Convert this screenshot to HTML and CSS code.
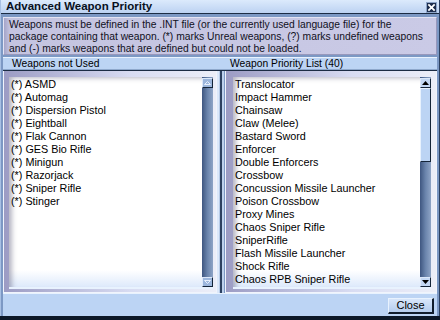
FILE: index.html
```html
<!DOCTYPE html>
<html>
<head>
<meta charset="utf-8">
<link rel="stylesheet" href="styles.css">
</head>
<body>
<div class="win">
  <div class="title">
    <span class="title-text">Advanced Weapon Priority</span>
    <span class="close-x"><svg width="10" height="9" viewBox="0 0 10 9"><path d="M1.5 1 L8.5 8 M8.5 1 L1.5 8" stroke="#fff" stroke-width="2"/></svg></span>
  </div>
  <div class="desc">Weapons must be defined in the .INT file (or the currently used language file) for the package containing that weapon. (*) marks Unreal weapons, (?) marks undefined weapons and (-) marks weapons that are defined but could not be loaded.</div>
  <div class="heads">
    <div class="head head-left">Weapons not Used</div>
    <div class="head head-right">Weapon Priority List (40)</div>
  </div>
  <div class="panels">
    <div class="panel panel-left">
      <div class="list">
        <div class="items">
          <div>(*) ASMD</div>
          <div>(*) Automag</div>
          <div>(*) Dispersion Pistol</div>
          <div>(*) Eightball</div>
          <div>(*) Flak Cannon</div>
          <div>(*) GES Bio Rifle</div>
          <div>(*) Minigun</div>
          <div>(*) Razorjack</div>
          <div>(*) Sniper Rifle</div>
          <div>(*) Stinger</div>
        </div>
        <div class="sbar">
          <div class="sbtn"><svg width="9" height="8" viewBox="0 0 9 8"><path d="M1.5 5.5 L4.5 2.5 L7.5 5.5 Z" fill="none" stroke="#e8f0fc" stroke-width="1"/></svg></div>
          <div class="strack"></div>
          <div class="sbtn"><svg width="9" height="8" viewBox="0 0 9 8"><path d="M1.5 2.5 L4.5 5.5 L7.5 2.5 Z" fill="none" stroke="#e8f0fc" stroke-width="1"/></svg></div>
        </div>
      </div>
    </div>
    <div class="divider"></div>
    <div class="panel panel-right">
      <div class="list">
        <div class="items">
          <div>Translocator</div>
          <div>Impact Hammer</div>
          <div>Chainsaw</div>
          <div>Claw (Melee)</div>
          <div>Bastard Sword</div>
          <div>Enforcer</div>
          <div>Double Enforcers</div>
          <div>Crossbow</div>
          <div>Concussion Missile Launcher</div>
          <div>Poison Crossbow</div>
          <div>Proxy Mines</div>
          <div>Chaos Sniper Rifle</div>
          <div>SniperRifle</div>
          <div>Flash Missile Launcher</div>
          <div>Shock Rifle</div>
          <div>Chaos RPB Sniper Rifle</div>
        </div>
        <div class="sbar">
          <div class="sbtn"><svg width="9" height="8" viewBox="0 0 9 8"><path d="M1 6 L4.5 2 L8 6 Z" fill="#000"/></svg></div>
          <div class="strack"><div class="thumb"></div></div>
          <div class="sbtn"><svg width="9" height="8" viewBox="0 0 9 8"><path d="M1 2 L4.5 6 L8 2 Z" fill="#000"/></svg></div>
        </div>
      </div>
    </div>
  </div>
  <div class="footer">
    <div class="btn">Close</div>
  </div>
</div>
</body>
</html>
```
FILE: styles.css
```css
* { box-sizing: border-box; }
html, body { margin: 0; padding: 0; }
body {
  width: 440px;
  height: 320px;
  background: #0c1828;
  font-family: "Liberation Sans", Arial, sans-serif;
  font-size: 11px;
  color: #000;
  overflow: hidden;
}
.win {
  width: 440px;
  height: 316px;
  background: #7c98c4;
  display: flex;
  flex-direction: column;
  border-left: 1px solid #a8c0e4;
  border-right: 1px solid #2c4060;
}
.title {
  height: 14px;
  background: linear-gradient(#dceafc, #bcd2f2);
  border-bottom: 1px solid #1c2c44;
  display: flex;
  align-items: center;
  justify-content: space-between;
  padding: 0 2px 0 5px;
}
.title-text {
  font-weight: bold;
  font-size: 11.5px;
  line-height: 13px;
  color: #08101c;
}
.close-x {
  width: 11px;
  height: 11px;
  background: #1c2c4c;
  border: 1px solid #8ca4c8;
  display: flex;
  align-items: center;
  justify-content: center;
  margin-top: 2px;
}
.desc {
  margin: 3px 2px 0 2px;
  height: 38px;
  background: linear-gradient(90deg, #a4a4c8 0px, #c4c4e0 6px, #cacae6 100%);
  border: 1px solid #e4e4f4;
  border-right-color: #9898bc;
  border-bottom-color: #9898bc;
  padding: 1px 4px 0 5px;
  line-height: 12px;
  font-size: 10.3px;
  color: #10101c;
}
.heads {
  margin: 2px 2px 0 2px;
  height: 13px;
  background: #bcd4f4;
  border-top: 1px solid #e8f2fe;
  border-bottom: 1px solid #8ea8cc;
  display: flex;
  font-size: 10.3px;
  line-height: 11px;
}
.head-left { width: 219px; padding-left: 9px; }
.head-right { padding-left: 8px; }
.panels {
  height: 223px;
  display: flex;
  margin: 0 2px 0 2px;
  border-top: 1px solid #1c2c44;
}
.panel {
  background: linear-gradient(90deg, #9c9cc4, #d8dcf2 60%, #eceef8);
  padding: 6px 3px 3px 5px;
  border: 1px solid #f0f4fc;
  border-top: none;
}
.panel-left { width: 214px; }
.panel-right { flex: 1; padding-left: 7px; padding-right: 5px; }
.divider {
  width: 8px;
  background: linear-gradient(90deg, #dce8fa 0 2px, #b8cce8 2px 3px, #2c4060 3px 5px, #bcd0ec 5px 7px, #7c98c4 7px 8px);
}
.list {
  height: 100%;
  display: flex;
  border-bottom: 2px solid #e8f2fe;
}
.items {
  flex: 1;
  background: linear-gradient(#ffffff 85%, #ffffff 92%, #dde9fb 100%);
  box-shadow: inset 5px 3px 5px -2px rgba(90, 90, 120, 0.45);
  padding: 1px 0 0 2px;
  font-size: 10.8px;
  line-height: 13px;
  color: #000;
}
.sbar {
  width: 11px;
  display: flex;
  flex-direction: column;
  background: linear-gradient(90deg, #3e5680, #6a84ac 50%, #8ea4c6);
  padding-top: 1px;
}
.sbtn {
  height: 10px;
  background: #9cb6dc;
  border: 1px solid #dce8fa;
  border-right-color: #142438;
  border-bottom-color: #142438;
  display: flex;
  align-items: center;
  justify-content: center;
}
.panel-right .sbtn { background: #c4d8f4; }
.strack { flex: 1; }
.thumb {
  height: 74px;
  background: #bcd4f4;
  border: 1px solid #e8f2fe;
  border-right-color: #142438;
  border-bottom-color: #142438;
}
.footer {
  flex: 1;
  margin: 0 2px;
  background: #bcd4f4;
  border-top: 1px solid #e8f2fe;
  display: flex;
  justify-content: flex-end;
  padding: 4px 3px 0 0;
}
.btn {
  width: 46px;
  height: 16px;
  background: linear-gradient(#d8e6fa, #b4cced);
  border: 1px solid #e8f2fe;
  border-right: 2px solid #101c2c;
  border-bottom: 2px solid #101c2c;
  text-align: center;
  font-size: 11px;
  line-height: 13px;
}
```
